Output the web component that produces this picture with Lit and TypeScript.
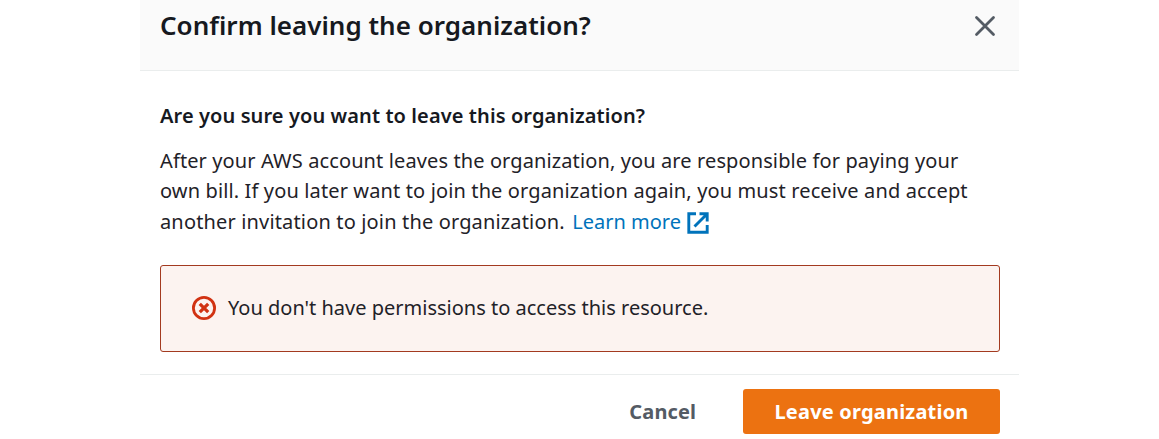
import { LitElement, html, css } from "lit";
import { customElement } from "lit/decorators.js";

@customElement("app-root")
export class AppRoot extends LitElement {
  static styles = css`
    :host {
      display: block;
      height: 439px;
      overflow: hidden;
      background: #fff;
      color: #16191f;
      font-family: "Noto Sans", "Open Sans", sans-serif;
      font-size: 20px;
    }
    * { box-sizing: border-box; }
    .dialog { width: 879px; margin-left: 140px; }
    header {
      height: 71px;
      padding: 0 23px 0 20px;
      background: #fafafa;
      border-bottom: 1px solid #eaeded;
      display: flex;
      justify-content: space-between;
      align-items: flex-start;
    }
    h1, h2, p { margin: 0; white-space: nowrap; }
    h1 { font-size: 26px; line-height: 36px; padding-top: 7px; font-weight: 600; letter-spacing: 0.02px; }
    button { font: inherit; border: 0; background: none; padding: 0; margin: 0; }
    .close { margin-top: 15px; width: 22px; height: 22px; }
    svg { display: block; }
    .content { height: 303px; padding: 30px 19px 0 20px; }
    h2 { font-size: 20px; line-height: 30px; font-weight: 600; letter-spacing: 0.095px; }
    .copy { padding-top: 15px; height: 106px; }
    .line { display: flex; height: 30px; line-height: 30px; color: #1f2228; }
    .l1 { letter-spacing: 0.112px; }
    .l2 { letter-spacing: 0.13px; }
    .l3 { letter-spacing: 0.155px; padding-top: 1px; height: 31px; }
    .link { display: flex; color: #0073bb; margin-left: 7.5px; text-decoration: none; letter-spacing: 0; }
    .link svg { margin: 5px 0 0 6.5px; }
    .alert {
      margin-top: 28px;
      height: 87px;
      border: 1px solid #a33a20;
      border-radius: 3px;
      background: #fcf3f0;
      display: flex;
      align-items: center;
      padding-left: 31px;
      gap: 12px;
    }
    .alert svg { margin-bottom: 1px; }
    .message { padding-bottom: 2px; color: #1f2228; }
    footer {
      height: 65px;
      border-top: 1px solid #eaeded;
      padding: 14px 19px 0 0;
      display: flex;
      justify-content: flex-end;
      font-weight: 700;
    }
    .cancel { color: #545b64; height: 45px; margin-right: 47px; letter-spacing: 0.1px; }
    .leave { width: 257px; height: 45px; border-radius: 3px; background: #ec7211; color: #fff; letter-spacing: 0.2px; }
  `;

  render() {
    return html`
      <section class="dialog" role="dialog">
        <header>
          <h1>Confirm leaving the organization?</h1>
          <button class="close" aria-label="Close">
            <svg width="22" height="22" viewBox="0 0 22 22" fill="none" stroke="#545b64" stroke-width="2.8" stroke-linecap="round">
              <path d="M2.5 2.5 19.5 19.5M19.5 2.5 2.5 19.5" />
            </svg>
          </button>
        </header>
        <div class="content">
          <h2>Are you sure you want to leave this organization?</h2>
          <div class="copy">
            <p class="line l1">After your AWS account leaves the organization, you are responsible for paying your</p>
            <p class="line l2">own bill. If you later want to join the organization again, you must receive and accept</p>
            <p class="line l3">
              <span>another invitation to join the organization.</span>
              <a class="link"><span>Learn more</span>
                <svg width="22" height="22" viewBox="0 0 22 22" fill="none" stroke="#0073bb" stroke-width="2.9">
                  <path d="M9 1.8H1.8V20.2H20.2V13M12.5 1.8H20.2V9.5M20 2 7.5 14.5" />
                </svg>
              </a>
            </p>
          </div>
          <div class="alert">
            <svg width="24" height="24" viewBox="0 0 24 24" fill="none" stroke="#d13212">
              <circle cx="12" cy="12" r="10.6" stroke-width="2.8" />
              <path d="M7.8 7.8 16.2 16.2M16.2 7.8 7.8 16.2" stroke-width="3.2" />
            </svg>
            <p class="message">You don't have permissions to access this resource.</p>
          </div>
        </div>
        <footer>
          <button class="cancel">Cancel</button>
          <button class="leave">Leave organization</button>
        </footer>
      </section>
    `;
  }
}
